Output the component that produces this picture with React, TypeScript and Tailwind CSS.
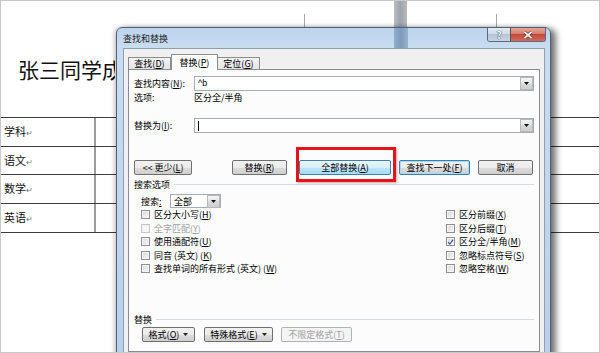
import type { ReactNode } from 'react'

const ui = "font-['Noto_Sans_CJK_SC','Liberation_Sans',sans-serif]"

// access key letter, underlined like the Windows dialog does
function K({ c }: { c: string }) {
  return <span className="underline underline-offset-[1px]">{c}</span>
}

function DropArrow() {
  return (
    <div className="w-[13px] h-[13px] shrink-0 flex items-center justify-center border border-[#b5b9bf] bg-[linear-gradient(#f4f4f4,#e6e6e6_50%,#d8d8d8_50%,#cfcfcf)]">
      <svg width="5" height="3" viewBox="0 0 5 3">
        <polygon points="0,0 5,0 2.5,3" fill="#111" />
      </svg>
    </div>
  )
}

function SmallArrow() {
  return (
    <svg width="5" height="3" viewBox="0 0 5 3" className="shrink-0">
      <polygon points="0,0 5,0 2.5,3" fill="#222" />
    </svg>
  )
}

function Btn({ children, className, kind = 'normal' }: { children: ReactNode; className: string; kind?: 'normal' | 'hover' | 'default' | 'disabled' }) {
  const skin =
    kind === 'hover'
      ? 'border-[#3c7fb1] bg-[linear-gradient(#eaf6fd,#d9f0fc_50%,#bee6fd_50%,#a7d9f5)] text-black'
      : kind === 'default'
        ? 'border-[#3c7fb1] bg-[linear-gradient(#f2f2f2,#ebebeb_50%,#dddddd_50%,#cfcfcf)] shadow-[inset_0_0_0_1px_#9fdcf7] text-black'
        : kind === 'disabled'
          ? 'border-[#adb2b5] bg-[#f4f4f4] text-[#a0a0a0]'
          : 'border-[#707070] bg-[linear-gradient(#f2f2f2,#ebebeb_50%,#dddddd_50%,#cfcfcf)] text-black'
  return (
    <div className={`h-[15px] shrink-0 rounded-[2px] border flex items-center justify-center leading-none ${skin} ${className}`}>
      {children}
    </div>
  )
}

function Check({ label, checked = false, disabled = false }: { label: ReactNode; checked?: boolean; disabled?: boolean }) {
  return (
    <div className="h-[13.5px] flex items-center gap-[4px] leading-none">
      <div
        className={`w-[9px] h-[9px] shrink-0 border flex items-center justify-center ${
          disabled ? 'border-[#c6c6c6] bg-[#f4f4f4]' : 'border-[#8e8f8f] bg-[linear-gradient(135deg,#d6d6d6,#f8f8f8)] shadow-[inset_0_0_0_1px_#f4f4f4]'
        }`}
      >
        {checked && (
          <svg width="8" height="8" viewBox="0 0 8 8">
            <path d="M1.2 4.2 L3.2 6.4 L7 1.2" fill="none" stroke="#3b55a3" strokeWidth="1.3" />
          </svg>
        )}
      </div>
      <span className={disabled ? 'text-[#a0a0a0]' : 'text-black'}>{label}</span>
    </div>
  )
}

const rows = ['学科', '语文', '数学', '英语']
const rowHeights = ['h-[29px]', 'h-[28px]', 'h-[29px]', 'h-[29px]']

export default function App() {
  return (
    <div className={`relative w-[600px] h-[353px] overflow-hidden bg-white border border-[#c8c8c8] ${ui}`}>
      {/* page marks above the dialog */}
      <div className="absolute left-[393px] top-0 w-[13px] h-[26px] bg-[linear-gradient(90deg,#b9bdc1,#9fa4a9_50%,#b6babe)]" />
      <div className="absolute left-[303px] top-[13px] w-px h-[14px] bg-[#a8a8a8]" />
      <div className="absolute left-[495px] top-[13px] w-px h-[14px] bg-[#a8a8a8]" />

      {/* document; the title runs on under the dialog */}
      <div className="pt-[53px] pl-[17px] h-[116px] w-[114px] overflow-hidden text-[21px] leading-[30px] text-[#111] whitespace-nowrap">张三同学成</div>
      <div className="border-b border-[#3c3c3c]">
        {rows.map((r, i) => (
          <div key={r} className={`${rowHeights[i]} border-t border-[#3c3c3c] flex`}>
            <div className="w-[95px] border-r-2 border-[#9c9c9c] pl-[3px] pt-[8px] text-[11px] leading-none text-[#111]">
              {r}
              <span className="text-[8px] text-[#777]">↵</span>
            </div>
            <div className="flex-1" />
          </div>
        ))}
      </div>

      {/* find & replace dialog */}
      <div className="absolute left-[115px] top-[26px] w-[435px] h-[332px] rounded-t-[6px] border border-[#4e6176] bg-[linear-gradient(#bcd4ed,#c9ddf2_20px,#b8d0ea)] flex flex-col shadow-[5px_2px_6px_rgba(0,0,0,0.55),-2px_0_4px_rgba(0,0,0,0.2)] text-[9px] text-black">
        <div className="relative h-[20px] shrink-0 flex items-start justify-between pl-[6px] pr-[4px]">
          <div className="absolute left-[277px] top-0 w-[14px] h-[20px] bg-[linear-gradient(90deg,#93aec9,#7c9aba_50%,#98b3cd)]" />
          <span className="relative mt-[6px] leading-none text-[#1e1e1e]">查找和替换</span>
          <div className="relative flex h-[14px] rounded-b-[3px] overflow-hidden border border-t-0 border-[#5a6b7e]">
            <div className="w-[22px] h-full flex items-center justify-center bg-[linear-gradient(#e3eaf2,#cfdbe7_45%,#b4c5d8_50%,#c7d6e6)] text-white font-bold text-[10px] leading-none [text-shadow:0_0_1px_#2b3440,0_0_1px_#2b3440]">
              ?
            </div>
            <div className="w-[35px] h-full flex items-center justify-center border-l border-[#6b4a4a] bg-[linear-gradient(#e6a596,#d67f70_45%,#c4473a_50%,#cf6d5c)]">
              <svg width="10" height="8" viewBox="0 0 10 8">
                <path d="M1.5 1 L8.5 7 M8.5 1 L1.5 7" stroke="#4a1f1a" strokeWidth="3" />
                <path d="M1.5 1 L8.5 7 M8.5 1 L1.5 7" stroke="#fff" strokeWidth="1.8" />
              </svg>
            </div>
          </div>
        </div>

        <div className="flex-1 ml-[6px] mr-[5px] bg-[#f0f0f0] border border-b-0 border-[#8d9fb3] px-[4px] pt-[5px]">
          {/* tabs */}
          <div className="h-[15px] flex items-end">
            <div className="w-[43px] h-[12px] border border-b-0 border-[#898c95] bg-[linear-gradient(#f3f3f3,#e4e4e4)] pt-[1px] text-center leading-[10px]">
              <span>
                查找(<K c="D" />)
              </span>
            </div>
            <div className="relative z-10 w-[47px] h-[16px] -mb-px border border-b-0 border-[#898c95] bg-[#fcfcfc] pt-[3px] text-center leading-[10px]">
              <span>
                替换(<K c="P" />)
              </span>
            </div>
            <div className="w-[42px] h-[12px] border border-b-0 border-l-0 border-[#898c95] bg-[linear-gradient(#f3f3f3,#e4e4e4)] pt-[1px] text-center leading-[10px]">
              <span>
                定位(<K c="G" />)
              </span>
            </div>
          </div>

          {/* tab page */}
          <div className="h-[283px] border border-[#898c95] bg-[#fcfcfc] px-[5px] pt-[6px] flex flex-col">
            <div className="h-[15px] flex items-center">
              <span className="w-[60px] shrink-0 leading-none">查找内容(<K c="N" />):</span>
              <div className="flex-1 h-[15px] border border-[#a5acb5] bg-white flex items-center">
                <span className="flex-1 pl-[3px] leading-none font-['Liberation_Sans',sans-serif]">^b</span>
                <DropArrow />
              </div>
            </div>
            <div className="h-[12px] flex items-center leading-none">
              <span className="w-[60px] shrink-0">选项:</span>
              <span>区分全/半角</span>
            </div>
            <div className="mt-[15px] h-[15px] flex items-center">
              <span className="w-[60px] shrink-0 leading-none">替换为(<K c="I" />):</span>
              <div className="flex-1 h-[15px] border border-[#a5acb5] bg-white flex items-center">
                <div className="flex-1 pl-[3px]">
                  <div className="w-px h-[10px] bg-black" />
                </div>
                <DropArrow />
              </div>
            </div>

            <div className="mt-[27px] flex">
              <Btn className="w-[58px]">
                <span>
                  &lt;&lt; 更少(<K c="L" />)
                </span>
              </Btn>
              <Btn className="ml-[40px] w-[55px]">
                <span>
                  替换(<K c="R" />)
                </span>
              </Btn>
              <Btn className="ml-[12px] w-[92px]" kind="hover">
                <span>
                  全部替换(<K c="A" />)
                </span>
              </Btn>
              <Btn className="ml-[8px] w-[71px]" kind="default">
                <span>
                  查找下一处(<K c="F" />)
                </span>
              </Btn>
              <Btn className="ml-[8px] w-[55px]">取消</Btn>
            </div>

            <div className="mt-[3px] h-[12px] flex items-center gap-[4px] leading-none">
              <span>搜索选项</span>
              <div className="flex-1 h-px bg-[#d5dbe1]" />
            </div>

            <div className="mt-[4px] h-[14px] flex items-center pl-[7px] leading-none">
              <span className="w-[29px]">
                搜索<K c=":" />
              </span>
              <div className="w-[51px] h-[14px] border border-[#a5acb5] bg-white flex items-center">
                <span className="flex-1 pl-[3px]">全部</span>
                <DropArrow />
              </div>
            </div>

            <div className="flex justify-between pl-[7px]">
              <div className="flex flex-col">
                <Check label={<>区分大小写(<K c="H" />)</>} />
                <Check label={<>全字匹配(<K c="Y" />)</>} disabled />
                <Check label={<>使用通配符(<K c="U" />)</>} />
                <Check label={<>同音 (英文) (<K c="K" />)</>} />
                <Check label={<>查找单词的所有形式 (英文) (<K c="W" />)</>} />
              </div>
              <div className="w-[88px] flex flex-col">
                <Check label={<>区分前缀(<K c="X" />)</>} />
                <Check label={<>区分后缀(<K c="T" />)</>} />
                <Check label={<>区分全/半角(<K c="M" />)</>} checked />
                <Check label={<>忽略标点符号(<K c="S" />)</>} />
                <Check label={<>忽略空格(<K c="W" />)</>} />
              </div>
            </div>

            <div className="mt-[37.5px] h-[12px] flex items-center gap-[4px] leading-none">
              <span>替换</span>
              <div className="flex-1 h-px bg-[#d5dbe1]" />
            </div>

            <div className="mt-[2px] flex pl-[8px]">
              <Btn className="w-[53px] gap-[4px]">
                <span>
                  格式(<K c="O" />)
                </span>
                <SmallArrow />
              </Btn>
              <Btn className="ml-[9px] w-[69px] gap-[4px]">
                <span>
                  特殊格式(<K c="E" />)
                </span>
                <SmallArrow />
              </Btn>
              <Btn className="ml-[8px] w-[71px]" kind="disabled">
                <span>
                  不限定格式(<K c="T" />)
                </span>
              </Btn>
            </div>
          </div>
        </div>
      </div>

      {/* red annotation box */}
      <div className="absolute left-[295px] top-[146px] w-[100px] h-[35px] border-[3px] border-[#e3141b] shadow-[1px_1px_2px_rgba(120,0,0,0.35)]" />
    </div>
  )
}
